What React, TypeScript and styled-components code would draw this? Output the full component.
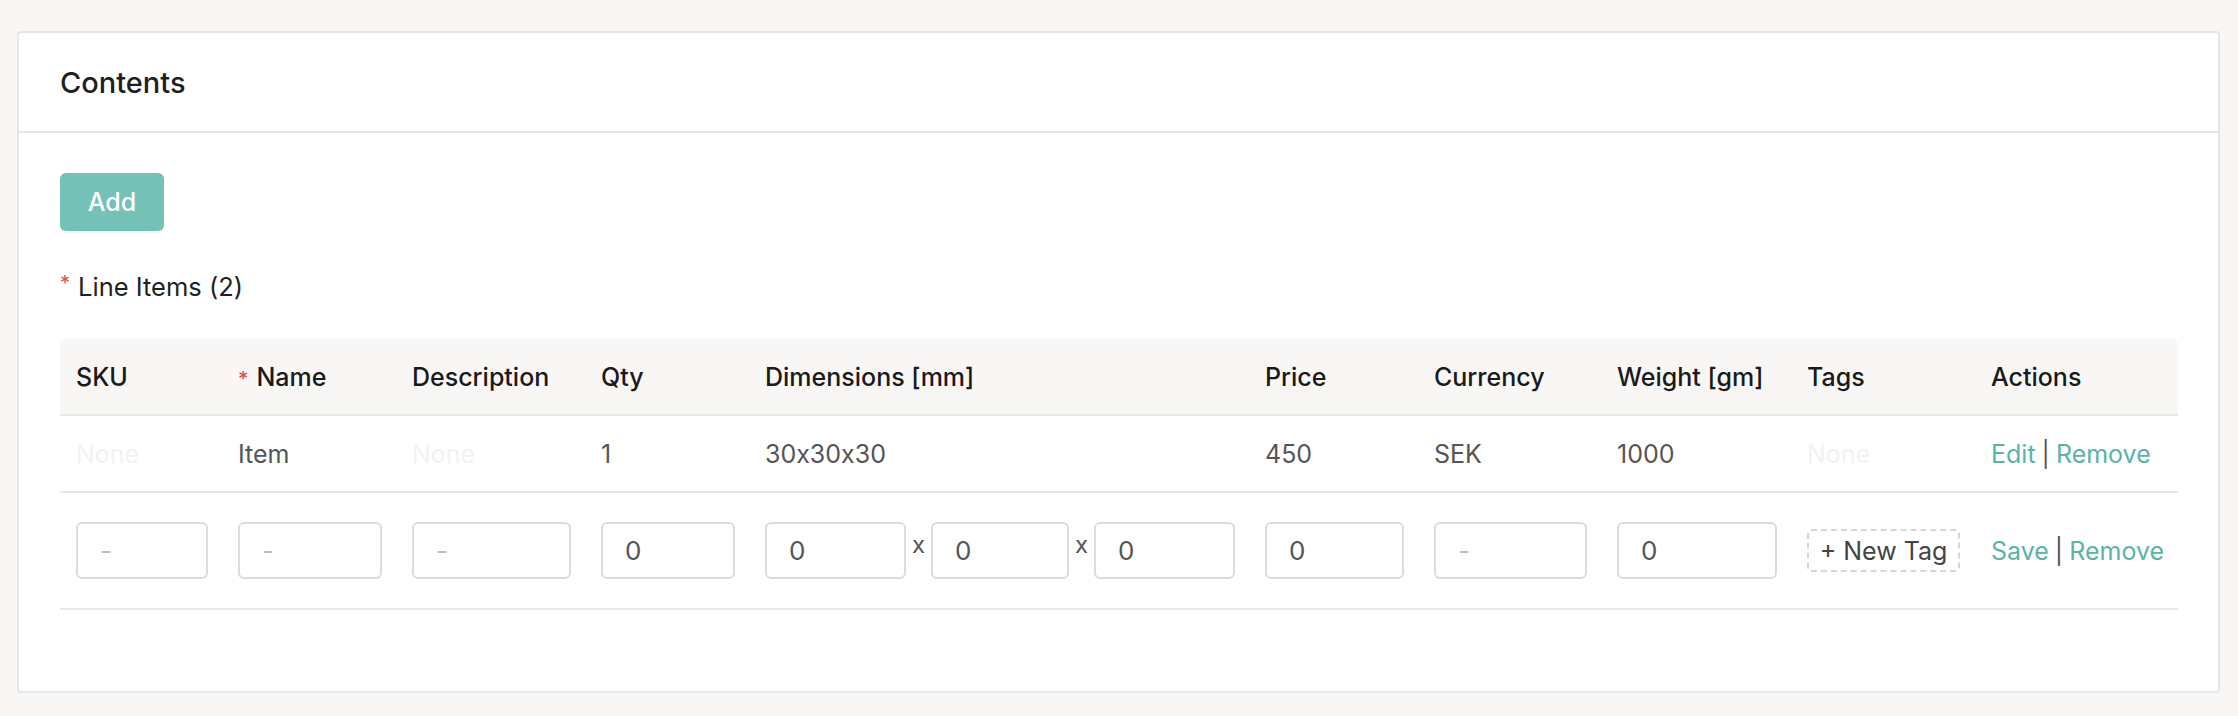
import * as React from 'react';
import styled, { createGlobalStyle } from 'styled-components';

const GlobalStyle = createGlobalStyle`
  html, body {
    margin: 0;
    padding: 0;
    background: #f8f7f5;
    font-family: Inter, 'Liberation Sans', Arial, sans-serif;
    font-feature-settings: 'calt' 0;
  }
  * {
    box-sizing: border-box;
  }
`;

const Card = styled.section`
  margin: 31px 18px 24px 17px;
  background: #fff;
  border: 2px solid #e6e6e4;
  border-radius: 4px;
`;

const CardHeader = styled.header`
  height: 100px;
  padding: 0 41px;
  display: flex;
  align-items: center;
  border-bottom: 2px solid #e8e8e6;
`;

const Title = styled.h2`
  margin: 0;
  font-size: 29px;
  font-weight: 500;
  color: #1f1f1f;
`;

const CardBody = styled.div`
  padding: 40px 40px 81px 41px;
`;

const AddButton = styled.button`
  width: 104px;
  height: 58px;
  border: none;
  border-radius: 6px;
  background: #74c2b7;
  color: #fff;
  font-family: inherit;
  font-size: 25px;
  font-weight: 500;
  box-shadow: 0 3px 0 rgba(0, 0, 0, 0.03);
  cursor: pointer;
`;

const SectionLabel = styled.div`
  margin: 39px 0 37px;
  height: 32px;
  display: flex;
  align-items: center;
  font-size: 25.5px;
  color: #1f1f1f;
`;

const Required = styled.span`
  color: #e5484d;
  font-size: 20px;
  margin-right: 8px;
  align-self: flex-start;
  line-height: 26px;
`;

const Table = styled.table`
  width: 100%;
  border-collapse: separate;
  border-spacing: 0;
  table-layout: fixed;
`;

const HeadCell = styled.th`
  height: 77px;
  padding: 0 14px 0 16px;
  text-align: left;
  font-size: 25px;
  font-weight: 500;
  color: #1a1a1a;
  background: #f8f7f5;
  border-bottom: 2px solid #e8e8e6;
  white-space: nowrap;

  &:first-child {
    border-top-left-radius: 6px;
  }
  &:last-child {
    border-top-right-radius: 6px;
  }
`;

const Cell = styled.td<{ $tall?: boolean }>`
  height: ${(p) => (p.$tall ? '117px' : '77px')};
  padding: 0 14px 0 16px;
  font-size: 25px;
  color: #555;
  border-bottom: 2px solid #e8e8e6;
  white-space: nowrap;
`;

const Empty = styled.span`
  color: #f2f2f0;
`;

const Field = styled.input<{ $w?: number }>`
  width: ${(p) => (p.$w ? `${p.$w}px` : '100%')};
  height: 57px;
  padding: 0 0 0 22px;
  border: 2px solid #dcdcdc;
  border-radius: 6px;
  font-family: inherit;
  font-size: 26px;
  color: #555;
  background: #fff;
  outline: none;

  &::placeholder {
    color: #bdbdbd;
  }
`;

const DimGroup = styled.div`
  display: flex;
  align-items: flex-start;
`;

const Times = styled.span`
  width: 25px;
  padding-top: 8px;
  text-align: center;
  font-size: 24px;
  color: #555;
`;

const NewTag = styled.button`
  width: 153px;
  height: 43px;
  border: 2px dashed #d6d6d6;
  border-radius: 4px;
  background: #fff;
  font-family: inherit;
  font-size: 25px;
  color: #444;
  padding: 0;
  cursor: pointer;
`;

const Link = styled.a`
  color: #5ab4a6;
  text-decoration: none;
  cursor: pointer;
`;

const Divider = styled.span`
  color: #555;
  margin: 0 6px;
`;

const widths = [162, 174, 189, 164, 500, 169, 183, 190, 184, 203];

const columns: { label: string; required?: boolean }[] = [
  { label: 'SKU' },
  { label: 'Name', required: true },
  { label: 'Description' },
  { label: 'Qty' },
  { label: 'Dimensions [mm]' },
  { label: 'Price' },
  { label: 'Currency' },
  { label: 'Weight [gm]' },
  { label: 'Tags' },
  { label: 'Actions' },
];

const App = () => (
  <>
    <GlobalStyle />
    <Card>
      <CardHeader>
        <Title>Contents</Title>
      </CardHeader>
      <CardBody>
        <AddButton>Add</AddButton>
        <SectionLabel>
          <Required>*</Required>
          Line Items (2)
        </SectionLabel>
        <Table>
          <colgroup>
            {widths.map((w, i) => (
              <col key={i} style={{ width: w }} />
            ))}
          </colgroup>
          <thead>
            <tr>
              {columns.map((c) => (
                <HeadCell key={c.label}>
                  {c.required && <Required>*</Required>}
                  {c.label}
                </HeadCell>
              ))}
            </tr>
          </thead>
          <tbody>
            <tr>
              <Cell><Empty>None</Empty></Cell>
              <Cell>Item</Cell>
              <Cell><Empty>None</Empty></Cell>
              <Cell>1</Cell>
              <Cell>30x30x30</Cell>
              <Cell>450</Cell>
              <Cell>SEK</Cell>
              <Cell>1000</Cell>
              <Cell><Empty>None</Empty></Cell>
              <Cell>
                <Link>Edit</Link>
                <Divider>|</Divider>
                <Link>Remove</Link>
              </Cell>
            </tr>
            <tr>
              <Cell $tall><Field placeholder="-" /></Cell>
              <Cell $tall><Field placeholder="-" /></Cell>
              <Cell $tall><Field placeholder="-" /></Cell>
              <Cell $tall><Field defaultValue="0" /></Cell>
              <Cell $tall>
                <DimGroup>
                  <Field $w={141} defaultValue="0" />
                  <Times>x</Times>
                  <Field $w={138} defaultValue="0" />
                  <Times>x</Times>
                  <Field $w={141} defaultValue="0" />
                </DimGroup>
              </Cell>
              <Cell $tall><Field defaultValue="0" /></Cell>
              <Cell $tall><Field placeholder="-" /></Cell>
              <Cell $tall><Field defaultValue="0" /></Cell>
              <Cell $tall><NewTag>+ New Tag</NewTag></Cell>
              <Cell $tall>
                <Link>Save</Link>
                <Divider>|</Divider>
                <Link>Remove</Link>
              </Cell>
            </tr>
          </tbody>
        </Table>
      </CardBody>
    </Card>
  </>
);

export default App;
